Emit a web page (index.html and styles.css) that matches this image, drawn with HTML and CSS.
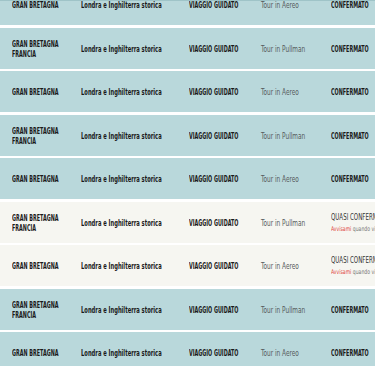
FILE: index.html
```html
<!DOCTYPE html>
<html lang="it">
<head>
<meta charset="utf-8">
<title>Viaggi</title>
<link rel="stylesheet" href="styles.css">
</head>
<body>
<div class="list">
  <div class="row">
    <div class="cell"><span class="caps">GRAN BRETAGNA</span></div>
    <div class="cell"><span class="mixed">Londra e Inghilterra storica</span></div>
    <div class="cell"><span class="caps">VIAGGIO GUIDATO</span></div>
    <div class="cell"><span class="reg">Tour in Aereo</span></div>
    <div class="cell"><span class="caps">CONFERMATO</span></div>
  </div>
  <div class="row">
    <div class="cell"><span class="caps">GRAN BRETAGNA<br>FRANCIA</span></div>
    <div class="cell"><span class="mixed">Londra e Inghilterra storica</span></div>
    <div class="cell"><span class="caps">VIAGGIO GUIDATO</span></div>
    <div class="cell"><span class="reg">Tour in Pullman</span></div>
    <div class="cell"><span class="caps">CONFERMATO</span></div>
  </div>
  <div class="row">
    <div class="cell"><span class="caps">GRAN BRETAGNA</span></div>
    <div class="cell"><span class="mixed">Londra e Inghilterra storica</span></div>
    <div class="cell"><span class="caps">VIAGGIO GUIDATO</span></div>
    <div class="cell"><span class="reg">Tour in Aereo</span></div>
    <div class="cell"><span class="caps">CONFERMATO</span></div>
  </div>
  <div class="row">
    <div class="cell"><span class="caps">GRAN BRETAGNA<br>FRANCIA</span></div>
    <div class="cell"><span class="mixed">Londra e Inghilterra storica</span></div>
    <div class="cell"><span class="caps">VIAGGIO GUIDATO</span></div>
    <div class="cell"><span class="reg">Tour in Pullman</span></div>
    <div class="cell"><span class="caps">CONFERMATO</span></div>
  </div>
  <div class="row">
    <div class="cell"><span class="caps">GRAN BRETAGNA</span></div>
    <div class="cell"><span class="mixed">Londra e Inghilterra storica</span></div>
    <div class="cell"><span class="caps">VIAGGIO GUIDATO</span></div>
    <div class="cell"><span class="reg">Tour in Aereo</span></div>
    <div class="cell"><span class="caps">CONFERMATO</span></div>
  </div>
  <div class="row pending">
    <div class="cell"><span class="caps">GRAN BRETAGNA<br>FRANCIA</span></div>
    <div class="cell"><span class="mixed">Londra e Inghilterra storica</span></div>
    <div class="cell"><span class="caps">VIAGGIO GUIDATO</span></div>
    <div class="cell"><span class="reg">Tour in Pullman</span></div>
    <div class="cell status">
      <span class="reg">QUASI CONFERMATO</span>
      <span class="note"><span class="alert">Avvisami</span> quando viene confermato</span>
    </div>
  </div>
  <div class="row pending">
    <div class="cell"><span class="caps">GRAN BRETAGNA</span></div>
    <div class="cell"><span class="mixed">Londra e Inghilterra storica</span></div>
    <div class="cell"><span class="caps">VIAGGIO GUIDATO</span></div>
    <div class="cell"><span class="reg">Tour in Aereo</span></div>
    <div class="cell status">
      <span class="reg">QUASI CONFERMATO</span>
      <span class="note"><span class="alert">Avvisami</span> quando viene confermato</span>
    </div>
  </div>
  <div class="row">
    <div class="cell"><span class="caps">GRAN BRETAGNA<br>FRANCIA</span></div>
    <div class="cell"><span class="mixed">Londra e Inghilterra storica</span></div>
    <div class="cell"><span class="caps">VIAGGIO GUIDATO</span></div>
    <div class="cell"><span class="reg">Tour in Pullman</span></div>
    <div class="cell"><span class="caps">CONFERMATO</span></div>
  </div>
  <div class="row">
    <div class="cell"><span class="caps">GRAN BRETAGNA</span></div>
    <div class="cell"><span class="mixed">Londra e Inghilterra storica</span></div>
    <div class="cell"><span class="caps">VIAGGIO GUIDATO</span></div>
    <div class="cell"><span class="reg">Tour in Aereo</span></div>
    <div class="cell"><span class="caps">CONFERMATO</span></div>
  </div>
</div>
</body>
</html>
```

FILE: styles.css
```css
html, body {
  margin: 0;
  padding: 0;
  background: #ffffff;
  overflow: hidden;
}

body {
  width: 375px;
  height: 366px;
  border-top: 1px solid #9fc4c8;
  box-sizing: border-box;
  font-family: "DejaVu Sans Condensed", "Liberation Sans", sans-serif;
  color: #1a1a1a;
}

.list {
  display: flex;
  flex-direction: column;
  gap: 2.5px;
  margin-top: -17px;
}

.row {
  display: grid;
  grid-template-columns: 69px 108px 72px 70px 200px;
  align-items: center;
  height: 41px;
  padding-left: 12px;
  background: #b9d8db;
  white-space: nowrap;
}

.row.pending {
  background: #f6f6f1;
}

.cell {
  display: flex;
  flex-direction: column;
  justify-content: center;
  padding-top: 1px;
}

.caps {
  display: inline-block;
  font-size: 8.5px;
  font-weight: bold;
  line-height: 10px;
  transform: scaleX(0.635);
  transform-origin: left center;
  color: #1a1a1a;
}

.mixed {
  display: inline-block;
  font-size: 8.5px;
  font-weight: bold;
  line-height: 10px;
  transform: scaleX(0.68);
  transform-origin: left center;
  color: #1a1a1a;
}

.reg {
  display: inline-block;
  font-size: 8.5px;
  line-height: 10px;
  transform: scaleX(0.76);
  transform-origin: left center;
  color: #555a5c;
}

.status {
  gap: 4px;
  padding-top: 0;
}

.status .reg {
  color: #333;
  transform: scaleX(0.72);
}

.note {
  display: inline-block;
  font-size: 6.5px;
  line-height: 7px;
  color: #777;
  transform: scaleX(0.78);
  transform-origin: left center;
}

.alert {
  color: #e0463e;
}
```
